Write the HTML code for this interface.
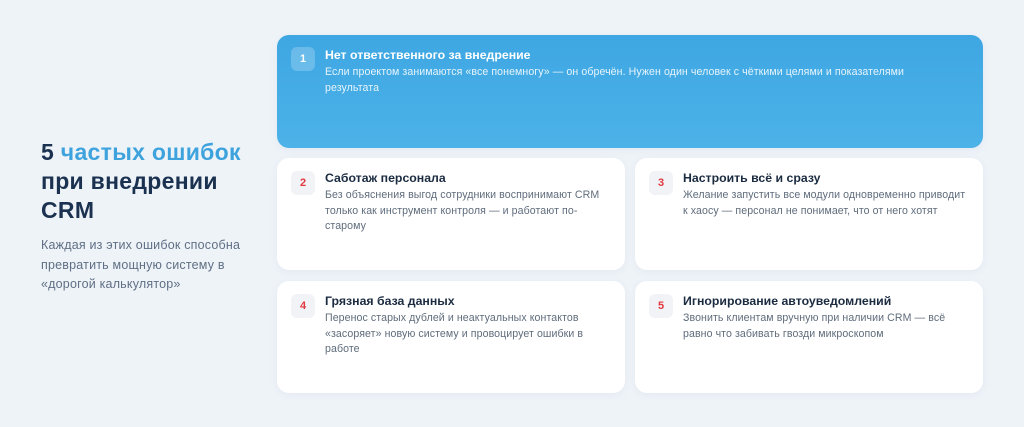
<!DOCTYPE html>
<html><head><meta charset="utf-8"><style>
*{margin:0;padding:0;box-sizing:border-box}
body{width:1024px;height:427px;background:#eef3f8;font-family:"Liberation Sans",sans-serif;position:relative;overflow:hidden}
h1{position:absolute;left:41px;top:138px;font-size:23px;line-height:29px;color:#1b3150;font-weight:700;letter-spacing:0.3px}
h1 span{color:#3ea3dd}
.p{position:absolute;left:41px;top:236px;font-size:12.5px;line-height:19.5px;color:#5f6f84;width:230px;letter-spacing:0.2px}
.c{position:absolute;background:#fff;border-radius:12px;box-shadow:0 2px 8px rgba(60,90,130,.06)}
.c .b{position:absolute;left:14px;top:13px;width:24px;height:24px;border-radius:6px;background:#f1f3f6;color:#e2383f;font-weight:700;font-size:11px;text-align:center;line-height:24px}
.c h3{position:absolute;left:48px;top:13px;font-size:12.3px;font-weight:700;color:#1b2b40}
.c p{position:absolute;left:48px;top:30px;font-size:10.6px;line-height:15.5px;color:#5f6c7c;right:10px;letter-spacing:0.08px}
.c.a{background:linear-gradient(180deg,#3ea6e2,#4cb2e8);}
.c.a .b{background:rgba(255,255,255,.22);color:#fff;top:12px}
.c.a h3{color:#fff}
.c.a p{color:#e6f4fc;right:40px}
</style></head><body>
<h1>5 <span>частых ошибок</span><br>при внедрении<br>CRM</h1>
<div class="p">Каждая из этих ошибок способна превратить мощную систему в «дорогой калькулятор»</div>
<div class="c a" style="left:277px;top:35px;width:706px;height:113px"><div class="b">1</div><h3>Нет ответственного за внедрение</h3><p>Если проектом занимаются «все понемногу» — он обречён. Нужен один человек с чёткими целями и показателями<br>результата</p></div>
<div class="c" style="left:277px;top:158px;width:348px;height:112px"><div class="b">2</div><h3>Саботаж персонала</h3><p>Без объяснения выгод сотрудники воспринимают CRM<br>только как инструмент контроля — и работают по-<br>старому</p></div>
<div class="c" style="left:635px;top:158px;width:348px;height:112px"><div class="b">3</div><h3>Настроить всё и сразу</h3><p>Желание запустить все модули одновременно приводит<br>к хаосу — персонал не понимает, что от него хотят</p></div>
<div class="c" style="left:277px;top:281px;width:348px;height:112px"><div class="b">4</div><h3>Грязная база данных</h3><p>Перенос старых дублей и неактуальных контактов<br>«засоряет» новую систему и провоцирует ошибки в<br>работе</p></div>
<div class="c" style="left:635px;top:281px;width:348px;height:112px"><div class="b">5</div><h3>Игнорирование автоуведомлений</h3><p>Звонить клиентам вручную при наличии CRM — всё<br>равно что забивать гвозди микроскопом</p></div>
</body></html>
